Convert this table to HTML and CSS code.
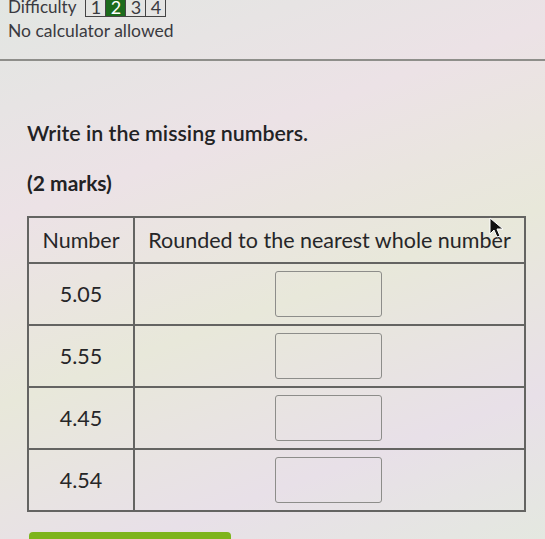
FILE: index.html
```html
<!DOCTYPE html>
<html>
<head>
<meta charset="utf-8">
<link rel="stylesheet" href="styles.css">
</head>
<body>
<div class="page">
  <div class="meta">
    <div class="difficulty">
      <span class="label">Difficulty</span>
      <span class="levels">
        <span class="lvl">1</span><span class="lvl on">2</span><span class="lvl">3</span><span class="lvl">4</span>
      </span>
    </div>
    <div class="calc">No calculator allowed</div>
  </div>
  <hr class="rule">
  <div class="question">
    <p class="prompt">Write in the missing numbers.</p>
    <p class="marks">(2 marks)</p>
    <div class="table-wrap">
      <table class="grid">
        <thead>
          <tr><th class="c1">Number</th><th>Rounded to the nearest whole number</th></tr>
        </thead>
        <tbody>
          <tr><td class="c1">5.05</td><td><span class="box"></span></td></tr>
          <tr><td class="c1">5.55</td><td><span class="box"></span></td></tr>
          <tr><td class="c1">4.45</td><td><span class="box"></span></td></tr>
          <tr><td class="c1">4.54</td><td><span class="box"></span></td></tr>
        </tbody>
      </table>
      <svg class="cursor" width="16" height="22" viewBox="0 0 16 22"><path d="M1 1 L1 17 L5 13 L8 20 L11 19 L8 12 L14 12 Z" fill="#111" stroke="#fff" stroke-width="1"/></svg>
    </div>
    <div class="btn"></div>
  </div>
</div>
</body>
</html>
```
FILE: styles.css
```css
html, body {
  margin: 0;
  padding: 0;
}
body {
  width: 545px;
  height: 539px;
  overflow: hidden;
  background: linear-gradient(160deg, #e2e6e2 0%, #ece2e6 30%, #e8e8da 55%, #e8e0e8 80%, #e4e8e0 100%);
  font-family: Lato, "Open Sans", sans-serif;
  color: #2b2b2e;
}
.page {
  display: flex;
  flex-direction: column;
}
.meta {
  padding-left: 8px;
  margin-top: -3px;
}
.difficulty {
  display: flex;
  align-items: center;
  gap: 9px;
  font-size: 17px;
  line-height: 20px;
  color: #3a3a40;
}
.levels {
  display: flex;
  border: 1px solid #444;
}
.lvl {
  width: 19px;
  text-align: center;
  font-size: 18px;
  line-height: 18px;
  border-left: 1px solid #444;
}
.lvl:first-child { border-left: none; }
.lvl.on {
  background: #1c6b1c;
  color: #fff;
}
.calc {
  margin-top: 3px;
  font-size: 17.5px;
  line-height: 22px;
  color: #3a3a40;
}
.rule {
  margin: 17px 0 0;
  border: none;
  border-top: 2px solid #8e8e8a;
  height: 0;
}
.question {
  padding-left: 27px;
}
.prompt {
  margin: 58px 0 0;
  font-size: 21.4px;
  font-weight: 600;
  line-height: 28px;
  color: #222224;
}
.marks {
  margin: 22px 0 0;
  font-size: 21px;
  font-weight: 700;
  line-height: 28px;
  color: #222224;
}
.table-wrap {
  position: relative;
  margin-top: 19px;
  width: 500px;
}
.grid {
  border-collapse: collapse;
  width: 499px;
  font-size: 21.5px;
  color: #262628;
}
.grid th, .grid td {
  border: 2px solid #646462;
  text-align: center;
  font-weight: 400;
}
.grid th {
  height: 44px;
  padding: 0 4px;
}
.grid th.c1 { width: 96px; }
.grid td {
  height: 60px;
  padding: 0;
}
.box {
  display: inline-block;
  width: 105px;
  height: 44px;
  border: 1.5px solid #8d8d8a;
  border-radius: 3px;
  vertical-align: middle;
  margin-left: -2px;
}
.cursor {
  position: absolute;
  left: 462px;
  top: 1px;
}
.btn {
  margin-top: 20px;
  width: 202px;
  height: 14px;
  margin-left: 2px;
  background: #7db41c;
  border-radius: 4px 4px 0 0;
}
```
